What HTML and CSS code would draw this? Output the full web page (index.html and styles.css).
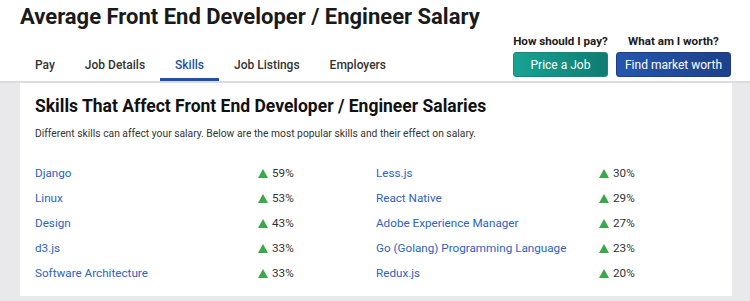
FILE: index.html
```html
<!DOCTYPE html>
<html lang="en">
<head>
  <meta charset="UTF-8" />
  <title>Front End Developer Salary</title>
  <link rel="stylesheet" href="styles.css">
</head>
<body>

  <header class="page-head">
    <h1 class="title">Average Front End Developer / Engineer Salary</h1>
    <div class="nav-row">
      <nav class="tabs">
        <a class="tab">Pay</a>
        <a class="tab">Job Details</a>
        <a class="tab active">Skills</a>
        <a class="tab">Job Listings</a>
        <a class="tab">Employers</a>
      </nav>
      <div class="cta">
        <div class="cta-item">
          <span class="cta-label">How should I pay?</span>
          <button class="btn btn-teal">Price a Job</button>
        </div>
        <div class="cta-item">
          <span class="cta-label">What am I worth?</span>
          <button class="btn btn-blue">Find market worth</button>
        </div>
      </div>
    </div>
  </header>

  <main class="content">
    <section class="card">
      <h2 class="card-title">Skills That Affect Front End Developer / Engineer Salaries</h2>
      <p class="card-desc">Different skills can affect your salary. Below are the most popular skills and their effect on salary.</p>
      <div class="skills">
        <ul class="skill-list">
          <li><a class="skill">Django</a><span class="pct">59%</span></li>
          <li><a class="skill">Linux</a><span class="pct">53%</span></li>
          <li><a class="skill">Design</a><span class="pct">43%</span></li>
          <li><a class="skill">d3.js</a><span class="pct">33%</span></li>
          <li><a class="skill">Software Architecture</a><span class="pct">33%</span></li>
        </ul>
        <ul class="skill-list">
          <li><a class="skill">Less.js</a><span class="pct">30%</span></li>
          <li><a class="skill">React Native</a><span class="pct">29%</span></li>
          <li><a class="skill">Adobe Experience Manager</a><span class="pct">27%</span></li>
          <li><a class="skill">Go (Golang) Programming Language</a><span class="pct">23%</span></li>
          <li><a class="skill">Redux.js</a><span class="pct">20%</span></li>
        </ul>
      </div>
    </section>
  </main>

</body>
</html>
```

FILE: styles.css
```css
body {
  margin: 0;
  font-family: Roboto, "Liberation Sans", sans-serif;
  color: #222;
  background: #e9e9eb;
}

.page-head {
  background: #fff;
  padding: 0 19px 0 20px;
  border-bottom: 2px solid #dcdcde;
}

.title {
  margin: 0;
  padding-top: 4px;
  font-size: 22px;
  line-height: 26px;
  font-weight: 700;
  color: #1a1a1a;
}

.nav-row {
  display: flex;
  justify-content: space-between;
  align-items: flex-end;
  height: 51px;
}

.tabs {
  display: flex;
}

.tab {
  font-size: 12px;
  font-weight: 500;
  color: #333;
  padding: 0 15px 5px;
  line-height: 16px;
  border-bottom: 3px solid transparent;
}

.tab.active {
  color: #1c4fae;
  border-bottom-color: #1c4fae;
}

.cta {
  display: flex;
  gap: 8px;
  padding-bottom: 4px;
}

.cta-item {
  display: flex;
  flex-direction: column;
  align-items: center;
}

.cta-label {
  font-size: 11.6px;
  font-weight: 700;
  line-height: 14px;
  margin-bottom: 4px;
  color: #1a1a1a;
}

.btn {
  font-family: inherit;
  font-size: 12px;
  color: #fff;
  border: 1px solid transparent;
  border-radius: 3px;
  height: 25px;
  padding: 0 8px;
  cursor: pointer;
}

.btn-teal {
  width: 95px;
  background: linear-gradient(90deg, #17a393, #0f7c71);
  border-color: #0f8a7c;
}

.btn-blue {
  background: linear-gradient(90deg, #2556ae, #1e4188);
  border-color: #1b3f86;
}

.content {
  padding: 0 18px 5px 20px;
}

.card {
  background: #fff;
  padding: 12px 15px 6px;
}

.card-title {
  margin: 0;
  font-size: 17.5px;
  line-height: 22px;
  font-weight: 700;
  color: #111;
}

.card-desc {
  margin: 10px 0 24px;
  font-size: 10.3px;
  line-height: 14px;
  color: #333;
}

.skills {
  display: grid;
  grid-template-columns: 341px 1fr;
}

.skill-list {
  list-style: none;
  margin: 0;
  padding: 0;
}

.skill-list li {
  display: grid;
  grid-template-columns: 223px 1fr;
  height: 25px;
  font-size: 11.7px;
  line-height: 16px;
}

.skill {
  color: #2d62c2;
}

.pct {
  color: #333;
}

.pct::before {
  content: "";
  display: inline-block;
  width: 0;
  height: 0;
  border-left: 5px solid transparent;
  border-right: 5px solid transparent;
  border-bottom: 9px solid #3aa84a;
  margin-right: 4px;
  vertical-align: -1px;
}
```
